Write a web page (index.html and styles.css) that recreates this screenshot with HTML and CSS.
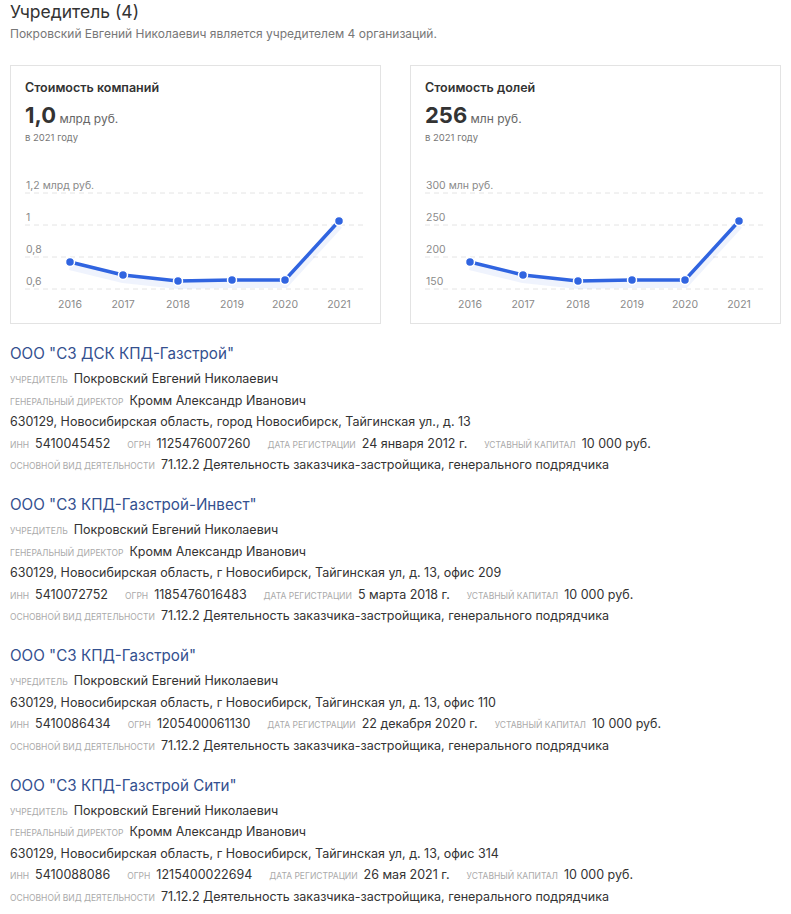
FILE: index.html
```html
<!DOCTYPE html>
<html lang="ru">
<head>
  <meta charset="UTF-8" />
  <meta name="viewport" content="width=device-width, initial-scale=1.0" />
  <title>Учредитель - Покровский Евгений Николаевич</title>
  <link rel="stylesheet" href="styles.css">
</head>
<body>
  <header>
    <h1>Учредитель (4)</h1>
    <p class="lead">Покровский Евгений Николаевич является учредителем 4 организаций.</p>
  </header>

  <div class="cards">
    <div class="card">
      <div class="card-title">Стоимость компаний</div>
      <div class="card-value"><b>1,0</b> млрд руб.</div>
      <div class="card-year">в 2021 году</div>
      <svg class="chart" viewBox="0 0 341 142" width="341" height="142">
        <g class="grid">
          <line x1="0" y1="22" x2="341" y2="22" />
          <line x1="0" y1="54" x2="341" y2="54" />
          <line x1="0" y1="86" x2="341" y2="86" />
          <line x1="0" y1="118" x2="341" y2="118" />
        </g>
        <g class="axis">
          <text x="1" y="18">1,2 млрд руб.</text>
          <text x="1" y="50">1</text>
          <text x="1" y="82">0,8</text>
          <text x="1" y="114">0,6</text>
        </g>
        <g class="years">
          <text x="45" y="137">2016</text>
          <text x="98" y="137">2017</text>
          <text x="153" y="137">2018</text>
          <text x="207" y="137">2019</text>
          <text x="260" y="137">2020</text>
          <text x="314" y="137">2021</text>
        </g>
        <polyline class="glow" points="45,91 98,104 153,110 207,109 260,109 314,50" />
        <polyline class="line" points="45,91 98,104 153,110 207,109 260,109 314,50" />
        <g class="dots">
          <circle cx="45" cy="91" r="4.5" />
          <circle cx="98" cy="104" r="4.5" />
          <circle cx="153" cy="110" r="4.5" />
          <circle cx="207" cy="109" r="4.5" />
          <circle cx="260" cy="109" r="4.5" />
          <circle cx="314" cy="50" r="4.5" />
        </g>
      </svg>
    </div>

    <div class="card">
      <div class="card-title">Стоимость долей</div>
      <div class="card-value"><b>256</b> млн руб.</div>
      <div class="card-year">в 2021 году</div>
      <svg class="chart" viewBox="0 0 341 142" width="341" height="142">
        <g class="grid">
          <line x1="0" y1="22" x2="341" y2="22" />
          <line x1="0" y1="54" x2="341" y2="54" />
          <line x1="0" y1="86" x2="341" y2="86" />
          <line x1="0" y1="118" x2="341" y2="118" />
        </g>
        <g class="axis">
          <text x="1" y="18">300 млн руб.</text>
          <text x="1" y="50">250</text>
          <text x="1" y="82">200</text>
          <text x="1" y="114">150</text>
        </g>
        <g class="years">
          <text x="45" y="137">2016</text>
          <text x="98" y="137">2017</text>
          <text x="153" y="137">2018</text>
          <text x="207" y="137">2019</text>
          <text x="260" y="137">2020</text>
          <text x="314" y="137">2021</text>
        </g>
        <polyline class="glow" points="45,91 98,104 153,110 207,109 260,109 314,50" />
        <polyline class="line" points="45,91 98,104 153,110 207,109 260,109 314,50" />
        <g class="dots">
          <circle cx="45" cy="91" r="4.5" />
          <circle cx="98" cy="104" r="4.5" />
          <circle cx="153" cy="110" r="4.5" />
          <circle cx="207" cy="109" r="4.5" />
          <circle cx="260" cy="109" r="4.5" />
          <circle cx="314" cy="50" r="4.5" />
        </g>
      </svg>
    </div>
  </div>

  <div class="company">
    <a class="company-name" href="#">ООО "СЗ ДСК КПД-Газстрой"</a>
    <div class="row"><span class="label">Учредитель</span><span class="value">Покровский Евгений Николаевич</span></div>
    <div class="row"><span class="label">Генеральный директор</span><span class="value">Кромм Александр Иванович</span></div>
    <div class="row"><span class="value">630129, Новосибирская область, город Новосибирск, Тайгинская ул., д. 13</span></div>
    <div class="row">
      <span class="pair"><span class="label">ИНН</span><span class="value">5410045452</span></span>
      <span class="pair"><span class="label">ОГРН</span><span class="value">1125476007260</span></span>
      <span class="pair"><span class="label">Дата регистрации</span><span class="value">24 января 2012 г.</span></span>
      <span class="pair"><span class="label">Уставный капитал</span><span class="value">10 000 руб.</span></span>
    </div>
    <div class="row"><span class="label">Основной вид деятельности</span><span class="value">71.12.2 Деятельность заказчика-застройщика, генерального подрядчика</span></div>
  </div>

  <div class="company">
    <a class="company-name" href="#">ООО "СЗ КПД-Газстрой-Инвест"</a>
    <div class="row"><span class="label">Учредитель</span><span class="value">Покровский Евгений Николаевич</span></div>
    <div class="row"><span class="label">Генеральный директор</span><span class="value">Кромм Александр Иванович</span></div>
    <div class="row"><span class="value">630129, Новосибирская область, г Новосибирск, Тайгинская ул, д. 13, офис 209</span></div>
    <div class="row">
      <span class="pair"><span class="label">ИНН</span><span class="value">5410072752</span></span>
      <span class="pair"><span class="label">ОГРН</span><span class="value">1185476016483</span></span>
      <span class="pair"><span class="label">Дата регистрации</span><span class="value">5 марта 2018 г.</span></span>
      <span class="pair"><span class="label">Уставный капитал</span><span class="value">10 000 руб.</span></span>
    </div>
    <div class="row"><span class="label">Основной вид деятельности</span><span class="value">71.12.2 Деятельность заказчика-застройщика, генерального подрядчика</span></div>
  </div>

  <div class="company">
    <a class="company-name" href="#">ООО "СЗ КПД-Газстрой"</a>
    <div class="row"><span class="label">Учредитель</span><span class="value">Покровский Евгений Николаевич</span></div>
    <div class="row"><span class="value">630129, Новосибирская область, г Новосибирск, Тайгинская ул, д. 13, офис 110</span></div>
    <div class="row">
      <span class="pair"><span class="label">ИНН</span><span class="value">5410086434</span></span>
      <span class="pair"><span class="label">ОГРН</span><span class="value">1205400061130</span></span>
      <span class="pair"><span class="label">Дата регистрации</span><span class="value">22 декабря 2020 г.</span></span>
      <span class="pair"><span class="label">Уставный капитал</span><span class="value">10 000 руб.</span></span>
    </div>
    <div class="row"><span class="label">Основной вид деятельности</span><span class="value">71.12.2 Деятельность заказчика-застройщика, генерального подрядчика</span></div>
  </div>

  <div class="company">
    <a class="company-name" href="#">ООО "СЗ КПД-Газстрой Сити"</a>
    <div class="row"><span class="label">Учредитель</span><span class="value">Покровский Евгений Николаевич</span></div>
    <div class="row"><span class="label">Генеральный директор</span><span class="value">Кромм Александр Иванович</span></div>
    <div class="row"><span class="value">630129, Новосибирская область, г Новосибирск, Тайгинская ул, д. 13, офис 314</span></div>
    <div class="row">
      <span class="pair"><span class="label">ИНН</span><span class="value">5410088086</span></span>
      <span class="pair"><span class="label">ОГРН</span><span class="value">1215400022694</span></span>
      <span class="pair"><span class="label">Дата регистрации</span><span class="value">26 мая 2021 г.</span></span>
      <span class="pair"><span class="label">Уставный капитал</span><span class="value">10 000 руб.</span></span>
    </div>
    <div class="row"><span class="label">Основной вид деятельности</span><span class="value">71.12.2 Деятельность заказчика-застройщика, генерального подрядчика</span></div>
  </div>
</body>
</html>
```

FILE: styles.css
```css
body {
  margin: 0;
  padding: 0 10px;
  font-family: 'Inter', 'Noto Sans', sans-serif;
  background: #fff;
  color: #333;
}
h1 {
  margin: 0;
  padding-top: 1px;
  font-size: 17.5px;
  line-height: 22px;
  font-weight: 400;
  color: #333;
}
.lead {
  margin: 3px 0 0;
  font-size: 12px;
  line-height: 16px;
  color: #777;
}
.cards {
  display: grid;
  grid-template-columns: 371px 371px;
  column-gap: 29px;
  margin-top: 23px;
  margin-bottom: 18px;
}
.card {
  border: 1px solid #e3e3e3;
  padding: 13px 14px 10px;
}
.card-title {
  font-size: 12.5px;
  line-height: 18px;
  font-weight: 600;
  color: #333;
}
.card-value {
  margin-top: 5px;
  font-size: 12px;
  line-height: 26px;
  color: #666;
}
.card-value b {
  font-size: 22px;
  font-weight: 700;
  color: #333;
}
.card-year {
  font-size: 9.5px;
  line-height: 12px;
  color: #777;
}
.chart {
  display: block;
  margin-top: 27px;
  overflow: visible;
}
.grid line {
  stroke: #e4e4e4;
  stroke-width: 1;
  stroke-dasharray: 5 4;
}
.axis text,
.years text {
  font-family: 'Inter', sans-serif;
  font-size: 10.5px;
  fill: #8a8a8a;
}
.years text {
  text-anchor: middle;
}
.glow {
  fill: none;
  stroke: #3366e0;
  stroke-width: 8;
  stroke-opacity: 0.08;
  transform: translateY(4px);
}
.line {
  fill: none;
  stroke: #3064e0;
  stroke-width: 3.5;
  stroke-linejoin: round;
}
.dots circle {
  fill: #3064e0;
  stroke: #fff;
  stroke-width: 1.5;
}
.company {
  margin-bottom: 17.5px;
}
.company-name {
  display: block;
  font-size: 15.2px;
  line-height: 24px;
  color: #34508f;
  text-decoration: none;
  margin-bottom: 2px;
}
.row {
  display: flex;
  align-items: baseline;
  height: 21.5px;
  font-size: 12.5px;
  line-height: 21.5px;
  white-space: nowrap;
}
.pair {
  display: flex;
  align-items: baseline;
  margin-right: 17px;
}
.label {
  font-size: 8.5px;
  line-height: 10px;
  text-transform: uppercase;
  color: #aaa;
  margin-right: 6px;
}
.value {
  color: #333;
}
```
